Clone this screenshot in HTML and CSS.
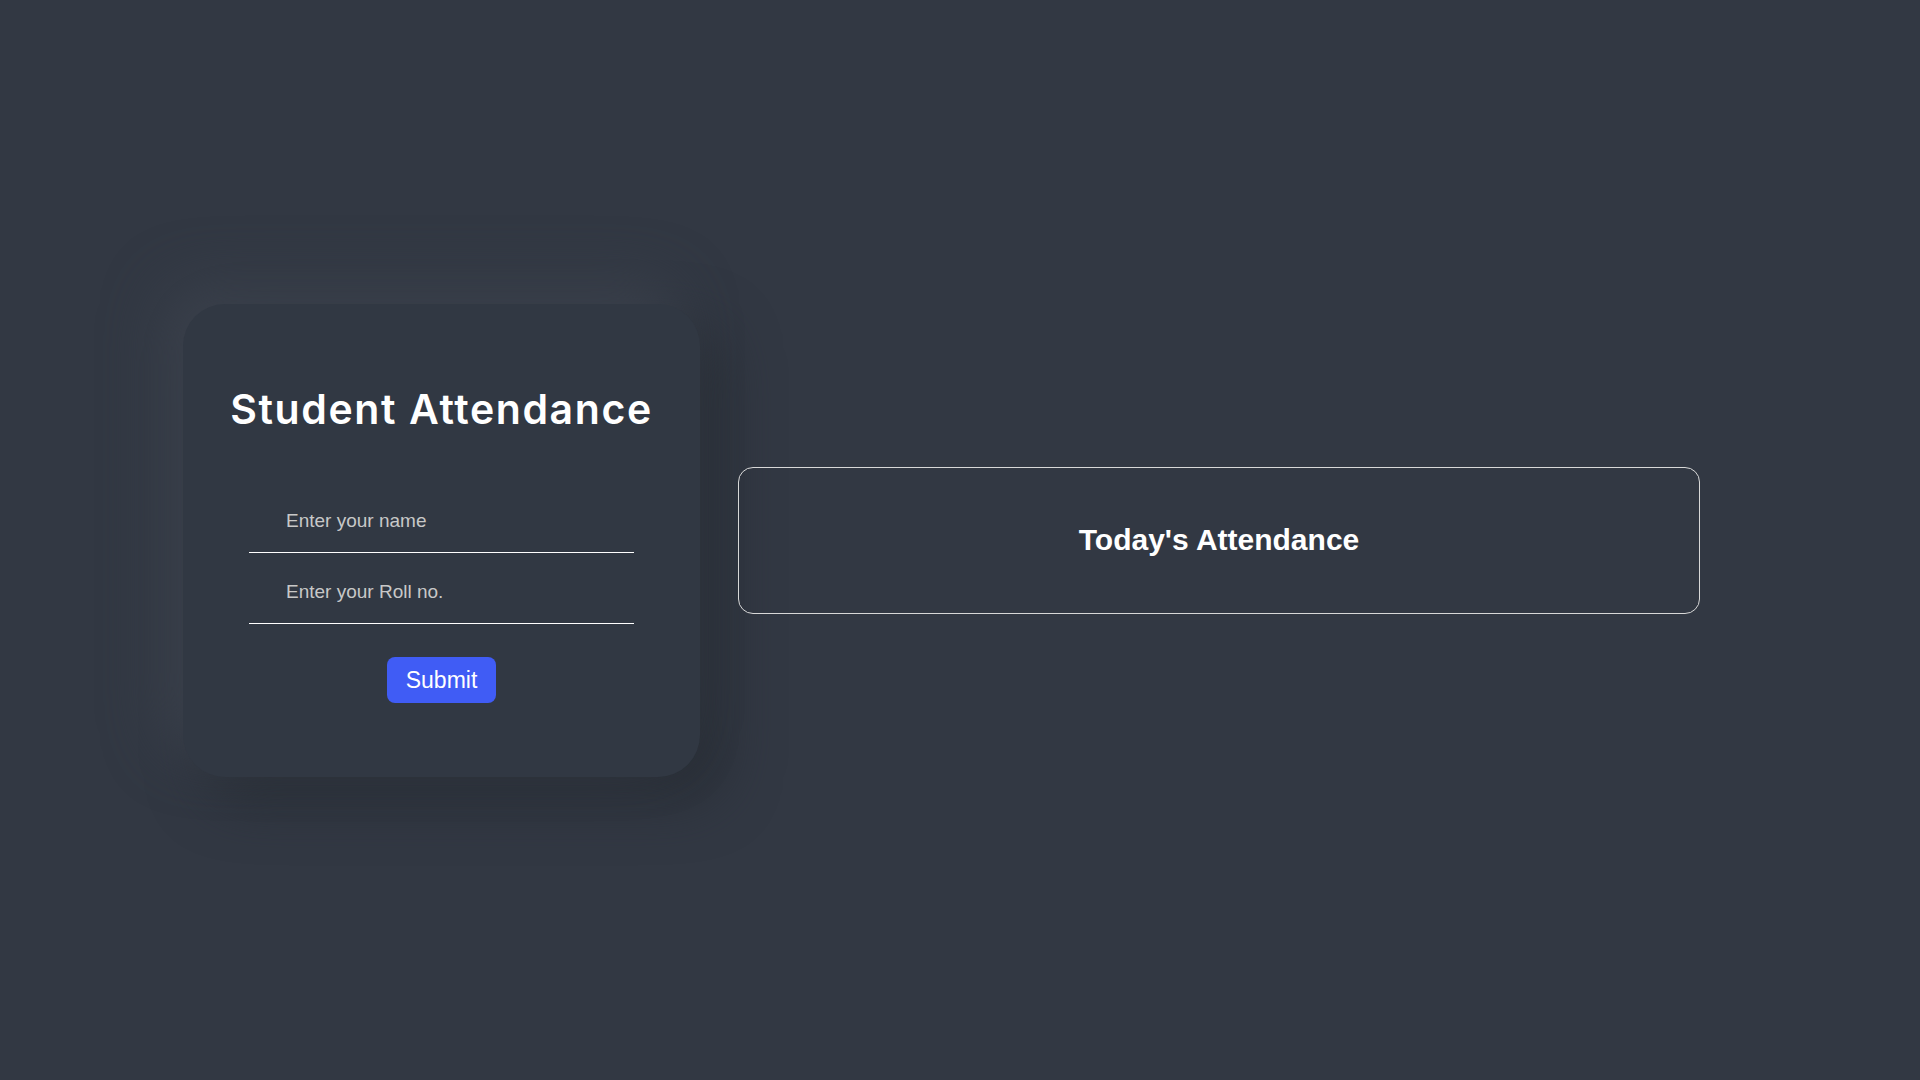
FILE: index.html
```html
<!DOCTYPE html>
<html lang="en">
<head>
<meta charset="UTF-8">
<title>Student Attendance</title>
<link rel="stylesheet" href="styles.css">
</head>
<body>
<main class="page">
  <section class="card">
    <h1 class="title">Student Attendance</h1>
    <form class="form" onsubmit="return false;">
      <input class="field" type="text" placeholder="Enter your name">
      <input class="field" type="text" placeholder="Enter your Roll no.">
      <button class="submit" type="submit">Submit</button>
    </form>
  </section>
  <section class="list">
    <h2 class="list-title">Today's Attendance</h2>
  </section>
</main>
</body>
</html>
```

FILE: styles.css
```css
* { box-sizing: border-box; }
html, body { margin: 0; padding: 0; }
body {
  background: #323843;
  font-family: "Liberation Sans", Arial, sans-serif;
  color: #fff;
}
.page {
  height: 100vh;
  display: flex;
  align-items: center;
  padding-left: 183px;
  gap: 38px;
}
.card {
  width: 517px;
  flex: none;
  background: #313843;
  border-radius: 42px;
  padding: 81px 66px 74px;
  box-shadow: -22px -22px 55px #3a404b, 22px 22px 55px #282d35;
  display: flex;
  flex-direction: column;
  align-items: center;
}
.title {
  margin: 0 0 67px;
  font-family: Inter, "Open Sans", sans-serif;
  font-weight: 600;
  font-size: 41px;
  line-height: 48px;
  letter-spacing: 1.6px;
  color: #fff;
  white-space: nowrap;
}
.form {
  width: 100%;
  display: flex;
  flex-direction: column;
  align-items: center;
  gap: 18px;
}
.field {
  width: 100%;
  background: transparent;
  border: 0;
  border-bottom: 1px solid #fff;
  outline: none;
  color: #fff;
  font-family: "Liberation Sans", Arial, sans-serif;
  font-size: 19px;
  line-height: 22px;
  padding: 10px 0 20px 37px;
}
.field::placeholder { color: #c8c8c8; opacity: 1; }
.submit {
  margin-top: 15px;
  background: #405cf5;
  color: #fff;
  border: 0;
  border-radius: 8px;
  font-family: "Liberation Sans", Arial, sans-serif;
  font-size: 23px;
  line-height: 26px;
  padding: 10px 19px;
  cursor: pointer;
}
.list {
  width: 962px;
  flex: none;
  height: 147px;
  border: 1px solid #d8d8d8;
  border-radius: 15px;
  display: flex;
  align-items: center;
  justify-content: center;
}
.list-title {
  margin: 0;
  font-family: "Liberation Sans", Arial, sans-serif;
  font-weight: 700;
  font-size: 30px;
  color: #fff;
}
```
